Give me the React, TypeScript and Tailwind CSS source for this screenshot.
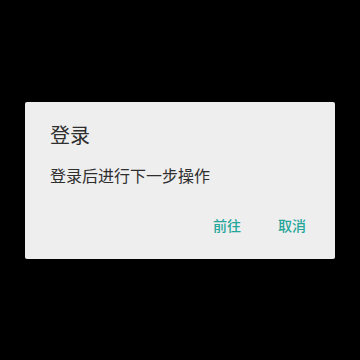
export default function App() {
  return (
    <div
      className="w-[360px] h-[360px] bg-black flex items-center justify-center"
      style={{ fontFamily: '"Noto Sans CJK SC", "Noto Sans", sans-serif' }}
    >
      <div className="w-[310px] h-[157px] bg-[#eeeeee] rounded-[2px] shadow-md flex flex-col pl-[25px] pr-[29px] pt-[21px]">
        <div className="text-[20px] leading-[24px] text-[#2e2e2e]">登录</div>
        <div className="mt-[18px] text-[16px] leading-[20px] text-[#2e2e2e]">登录后进行下一步操作</div>
        <div className="mt-[30px] flex justify-end gap-[37px] text-[14px] leading-[20px] text-[#26a69a] font-medium">
          <span>前往</span>
          <span>取消</span>
        </div>
      </div>
    </div>
  );
}
